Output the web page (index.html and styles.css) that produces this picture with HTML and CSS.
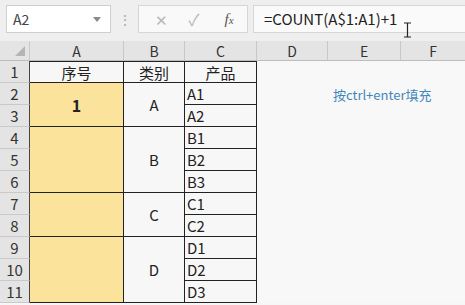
FILE: index.html
```html
<!DOCTYPE html>
<html>
<head>
    <meta charset="utf-8">
    <title>序号填充</title>
    <link rel="stylesheet" href="styles.css">
</head>
<body>
    <div class="toolbar">
        <div class="namebox">
            <span>A2</span>
            <span class="arrow"></span>
        </div>
        <div class="grip">⋮</div>
        <div class="fxbox">
            <span class="fx-btn">✕</span>
            <span class="fx-btn check">✓</span>
            <span class="fx-btn fx"><i>f</i><i class="x">x</i></span>
        </div>
        <div class="formula">=COUNT(A$1:A1)+1</div>
        <svg class="ibeam" width="9" height="16" viewBox="0 0 9 16">
            <path d="M1 1h7M1 15h7M4.5 1v14" stroke="#222" stroke-width="1.2" fill="none"/>
        </svg>
    </div>

    <div class="sheet">
        <!-- column headers -->
        <div class="ch corner"><span class="tri"></span></div>
        <div class="ch">A</div>
        <div class="ch">B</div>
        <div class="ch">C</div>
        <div class="ch">D</div>
        <div class="ch">E</div>
        <div class="ch last">F</div>

        <!-- row 1 -->
        <div class="rh">1</div>
        <div class="td top">序号</div>
        <div class="td top">类别</div>
        <div class="td top">产品</div>
        <div class="e"></div><div class="e"></div><div class="e"></div>

        <!-- row 2 -->
        <div class="rh">2</div>
        <div class="td yellow span2 num">1</div>
        <div class="td span2">A</div>
        <div class="td left">A1</div>
        <div class="e"></div>
        <div class="e"><span class="note">按ctrl+enter填充</span></div>
        <div class="e"></div>

        <!-- row 3 -->
        <div class="rh">3</div>
        <div class="td left">A2</div>
        <div class="e"></div><div class="e"></div><div class="e"></div>

        <!-- row 4 -->
        <div class="rh">4</div>
        <div class="td yellow span3"></div>
        <div class="td span3">B</div>
        <div class="td left">B1</div>
        <div class="e"></div><div class="e"></div><div class="e"></div>

        <div class="rh">5</div>
        <div class="td left">B2</div>
        <div class="e"></div><div class="e"></div><div class="e"></div>

        <div class="rh">6</div>
        <div class="td left">B3</div>
        <div class="e"></div><div class="e"></div><div class="e"></div>

        <!-- row 7 -->
        <div class="rh">7</div>
        <div class="td yellow span2"></div>
        <div class="td span2">C</div>
        <div class="td left">C1</div>
        <div class="e"></div><div class="e"></div><div class="e"></div>

        <div class="rh">8</div>
        <div class="td left">C2</div>
        <div class="e"></div><div class="e"></div><div class="e"></div>

        <!-- row 9 -->
        <div class="rh">9</div>
        <div class="td yellow span3"></div>
        <div class="td span3">D</div>
        <div class="td left">D1</div>
        <div class="e"></div><div class="e"></div><div class="e"></div>

        <div class="rh">10</div>
        <div class="td left">D2</div>
        <div class="e"></div><div class="e"></div><div class="e"></div>

        <div class="rh">11</div>
        <div class="td left">D3</div>
        <div class="e"></div><div class="e"></div><div class="e"></div>
    </div>
</body>
</html>
```

FILE: styles.css
```css
* {
    box-sizing: border-box;
}

body {
    margin: 0;
    background: #f6f6f6;
    font-family: "Noto Sans CJK SC", "Noto Sans", sans-serif;
    color: #222;
    overflow: hidden;
}

.toolbar {
    position: relative;
    height: 41px;
    background: #efefef;
    display: flex;
    align-items: flex-start;
    padding-top: 5px;
}

.namebox {
    margin-left: 6px;
    width: 105px;
    height: 28px;
    background: #fff;
    border: 1px solid #cfcfcf;
    display: flex;
    align-items: center;
    justify-content: space-between;
    padding: 0 9px 0 6px;
    font-size: 14px;
    color: #444;
}

.arrow {
    width: 0;
    height: 0;
    border-left: 4px solid transparent;
    border-right: 4px solid transparent;
    border-top: 5px solid #8a8a8a;
}

.grip {
    width: 27px;
    height: 28px;
    text-align: center;
    line-height: 28px;
    font-size: 14px;
    color: #aaa;
}

.fxbox {
    width: 110px;
    height: 28px;
    background: #f9f9f9;
    border: 1px solid #d6d6d6;
    display: flex;
    align-items: center;
    padding-left: 12px;
    gap: 13px;
}

.fx-btn {
    width: 20px;
    text-align: center;
    font-size: 15px;
    color: #b8b8b8;
}

.fx-btn.check {
    font-size: 16px;
}

.fx-btn.fx {
    font-family: "Liberation Serif", serif;
    color: #555;
    font-size: 15px;
    margin-left: 2px;
}

.fx-btn.fx .x {
    font-size: 11px;
}

.formula {
    flex: 1;
    margin-left: 5px;
    height: 28px;
    background: #fafafa;
    border: 1px solid #d6d6d6;
    border-right: none;
    padding-left: 10px;
    line-height: 26px;
    font-size: 15px;
    color: #222;
}

.ibeam {
    position: absolute;
    left: 403px;
    top: 22px;
}

.sheet {
    display: grid;
    grid-template-columns: 30px 94px 61px 72px 71px 73px 1fr;
    grid-template-rows: 20px repeat(11, 22px);
}

.ch {
    background: #e4e4e4;
    border-right: 1px solid #c9c9c9;
    border-bottom: 1px solid #bdbdbd;
    text-align: center;
    font-size: 14px;
    line-height: 20px;
    color: #333;
}

.ch.last {
    border-right: none;
}

.corner {
    position: relative;
}

.tri {
    position: absolute;
    right: 4px;
    bottom: 4px;
    width: 0;
    height: 0;
    border-left: 10px solid transparent;
    border-bottom: 10px solid #b5b5b5;
}

.rh {
    background: #e4e4e4;
    border-right: 1px solid #444;
    border-bottom: 1px solid #c9c9c9;
    text-align: center;
    font-size: 15px;
    line-height: 22px;
    color: #333;
}

.td {
    background: #f7f7f7;
    border-right: 1px solid #222;
    border-bottom: 1px solid #222;
    display: flex;
    align-items: center;
    justify-content: center;
    font-size: 15px;
}

.td.top {
    border-top: 1px solid #222;
}

.td.left {
    justify-content: flex-start;
    padding-left: 2px;
}

.td.yellow {
    background: #fbe39b;
}

.td.num {
    font-weight: bold;
    font-size: 16px;
}

.span2 {
    grid-row: span 2;
}

.span3 {
    grid-row: span 3;
}

.e {
    background: #f8f8f8;
    position: relative;
}

.note {
    position: absolute;
    z-index: 1;
    left: 5px;
    top: 2px;
    white-space: nowrap;
    font-size: 13px;
    color: #3f87bb;
}
```
